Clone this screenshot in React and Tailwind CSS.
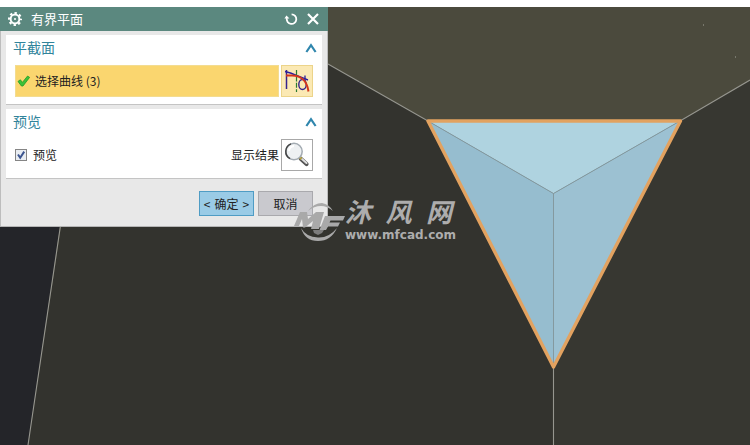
import { useState } from 'react'

function GearIcon() {
  return (
    <svg viewBox="0 0 16 16" className="size-4" fill="none" stroke="#fff">
      <circle cx="8" cy="8" r="4.4" strokeWidth="2" />
      <circle cx="8" cy="8" r="6" strokeWidth="2" strokeDasharray="2.4 2.31" strokeDashoffset="1.2" />
      <circle cx="8" cy="8" r="1" fill="#fff" stroke="none" />
    </svg>
  )
}

function ResetIcon() {
  return (
    <svg viewBox="0 0 14 14" className="size-3.5" fill="none" stroke="#fff" strokeWidth="1.8">
      <path d="M7.6 2.3 A4.8 4.8 0 1 1 2.8 6.2" />
      <path d="M.4 6.6 L2.5 3.4 L5.4 6.4 Z" fill="#fff" stroke="none" />
    </svg>
  )
}

function CloseIcon() {
  return (
    <svg viewBox="0 0 14 14" className="size-3.5" fill="none" stroke="#fff" strokeWidth="2.2">
      <path d="M2 2 L12 12 M12 2 L2 12" />
    </svg>
  )
}

function CaretIcon({ className }) {
  return (
    <svg viewBox="0 0 12 10" className={className} fill="none" stroke="#2f86ad" strokeWidth="2.2">
      <path d="M1.4 9 L6 2.2 L10.6 9" />
    </svg>
  )
}

function TickIcon() {
  return (
    <svg viewBox="0 0 14 14" className="size-3.5" fill="#3cc238" stroke="#1f9a24" strokeWidth=".8">
      <path d="M1 7.4 L3.4 5.8 L5.4 8.4 L10.6 2 L12.6 3.4 L6 12 L4.4 12 Z" />
    </svg>
  )
}

function CurveIcon() {
  return (
    <svg viewBox="0 0 30 30" className="size-full" fill="none">
      <path d="M4.5 4 V23" stroke="#35238c" strokeWidth="1.5" />
      <path d="M3 5.5 C10 7 18 11 26 14" stroke="#2a1f9c" strokeWidth="1.4" />
      <path d="M14.5 4 V26" stroke="#2c7a32" strokeWidth="1.2" strokeDasharray="5 1.4" />
      <ellipse cx="20.5" cy="18.5" rx="3.7" ry="5" stroke="#35238c" strokeWidth="1.4" />
      <path d="M23 9.5 V15" stroke="#2a1f9c" strokeWidth="1.3" />
      <path d="M4 9.5 H10 C18 9.5 25 14 26.5 25.5" stroke="#d4361b" strokeWidth="2" />
    </svg>
  )
}

function MagnifierIcon() {
  return (
    <svg viewBox="0 0 30 30" className="size-full" fill="none">
      <path d="M18.5 18.5 L24.5 24" stroke="#555" strokeWidth="4.2" strokeLinecap="round" />
      <path d="M20 19 L24.5 23" stroke="#dedede" strokeWidth="2" strokeLinecap="round" />
      <path d="M16.6 16.2 L19.4 19" stroke="#b5a03c" strokeWidth="2.6" />
      <circle cx="12" cy="11.5" r="8.2" fill="#eef1f3" stroke="#a3abb2" strokeWidth="1.5" />
      <path d="M8 18.7 A8.2 8.2 0 0 1 9 3.9" stroke="#444" strokeWidth="1.5" />
      <path d="M7 11 A5.5 5.5 0 0 1 12 6" stroke="#fff" strokeWidth="2" />
    </svg>
  )
}

function Viewport() {
  return (
    <svg viewBox="0 7 750 438" preserveAspectRatio="xMinYMin slice" className="absolute inset-0 size-full" fill="none">
      <path d="M0 7 H750 V445 H0 Z" fill="#4b4a3d" />
      <path d="M328 64 L427 120 L553.5 367 V445 H28 L62 220 V7 H328 Z" fill="#33332e" />
      <path d="M750 80 L681 120 L553.5 367 V445 H750 Z" fill="#373731" />
      <path d="M0 220 H61 L28 445 H0 Z" fill="#242529" />
      <path d="M61 222 L28 445 M328 64 L428 121 M750 80 L680 121 M553.5 367 V445" stroke="#96968f" strokeWidth="1.1" />
      <path d="M428 121 H680 L553.5 193.5 Z" fill="#afd3e0" />
      <path d="M428 121 L553.5 193.5 V367 Z" fill="#96bdcf" />
      <path d="M680 121 L553.5 193.5 V367 Z" fill="#9cc1d2" />
      <path d="M428 121 L553.5 193.5 L680 121 M553.5 193.5 V367" stroke="#84999f" />
      <path d="M428 121 H680.5 L553.5 367 Z" stroke="#e2a260" strokeWidth="3.4" strokeLinejoin="round" />
      <path d="M703 25 h1 M735 57 h1" stroke="#a5a59c" />
    </svg>
  )
}

function Watermark() {
  return (
    <div className="pointer-events-none absolute top-[191px] left-[293px] flex items-center text-[#adadad]">
      <svg viewBox="0 0 52 44" className="h-11 w-[52px]" fill="#a9a9a9">
        <path d="M15 13 Q21 5 29 5 Q36 6 40 13 Q34 8 28 8 Q21 8 15 13 Z" />
        <path d="M8 30 Q12 43 25 43 Q38 43 44 30 Q36 40 25 39.5 Q13 39 8 30 Z" />
        <path d="M1 28 L7 14 H14 L15 21 L23 14 H31 L26 31 H18 L20 23 L12 29.5 H10 L9 21 L6 28 Z" />
        <path d="M32 18 H52 L50 22.5 H37.5 L36.5 24.5 H47 L45 28.5 H35 L33 32 H26.5 Z" />
        <path d="M20 32 H31 L29 35 L25 37 L21 35 Z" fill="#7d7d7d" />
      </svg>
      <div>
        <div className="flex justify-between pr-1 font-['Liberation_Sans','Noto_Sans_CJK_SC',sans-serif] text-[26px] leading-[30px] font-bold italic">
          <span>沐</span>
          <span>风</span>
          <span>网</span>
        </div>
        <div className="font-['DejaVu_Sans',sans-serif] text-[12px] leading-[14px] font-bold">www.mfcad.com</div>
      </div>
    </div>
  )
}

function Section({ title, children }) {
  const [open, setOpen] = useState(true)
  return (
    <section className="border-b border-[#c4c4c4] bg-white px-[9px] pb-[7px]">
      <div className="-ml-0.5 flex h-[30px] items-start justify-between">
        <h2 className="text-[14px] leading-[25px] text-[#31849b]">{title}</h2>
        <button type="button" aria-label={title} aria-expanded={open} onClick={() => setOpen(!open)} className="-mr-1 flex h-[25px] items-center">
          <CaretIcon className={open ? 'h-2.5 w-3' : 'h-2.5 w-3 rotate-180'} />
        </button>
      </div>
      {open && children}
    </section>
  )
}

export default function App() {
  const [preview, setPreview] = useState(true)
  return (
    <div className="flex min-h-screen flex-col bg-white pt-[7px] font-['Noto_Sans_CJK_SC',sans-serif] text-[12px] text-[#222]">
      <main className="relative flex-1 overflow-hidden">
        <Viewport />
        <div role="dialog" aria-label="有界平面" className="relative w-[328px] border-b border-[#b5b5b5] bg-[#e8e8e8]">
          <header className="flex h-6 items-center gap-2 bg-[#5b887f] pr-2 pl-[7px] text-white">
            <GearIcon />
            <h1 className="flex-1 text-[13px] leading-6">有界平面</h1>
            <button type="button" aria-label="重置"><ResetIcon /></button>
            <button type="button" aria-label="关闭"><CloseIcon /></button>
          </header>

          <div className="border-x border-[#bdbdbd] px-[5px] pt-1 pb-2.5">
            <div className="flex flex-col gap-1">
              <Section title="平截面">
                <div className="flex gap-0.5">
                  <button type="button" className="flex h-8 flex-1 items-center gap-1 border border-[#f3dc90] bg-[#fad66f] pl-px">
                    <TickIcon />
                    选择曲线 (3)
                  </button>
                  <button type="button" aria-label="曲线" className="size-8 border border-[#ecd48a] bg-[#fbe9b4]"><CurveIcon /></button>
                </div>
              </Section>

              <Section title="预览">
                <div className="flex items-center justify-between">
                  <label className="flex items-center gap-1.5">
                    <span className="relative size-3">
                      <input
                        type="checkbox"
                        checked={preview}
                        onChange={e => setPreview(e.target.checked)}
                        className="block size-3 appearance-none border border-[#858585] bg-[#e9edf2]"
                      />
                      {preview && (
                        <svg viewBox="0 0 12 12" className="pointer-events-none absolute inset-0 size-3" fill="none" stroke="#3c5590" strokeWidth="2">
                          <path d="M3 5.5 L5.2 8.8 L9.2 2.6" />
                        </svg>
                      )}
                    </span>
                    预览
                  </label>
                  <div className="flex items-center gap-0.5">
                    <span id="show-result">显示结果</span>
                    <button type="button" aria-labelledby="show-result" className="size-8 border border-[#a8a8a8] bg-white"><MagnifierIcon /></button>
                  </div>
                </div>
              </Section>
            </div>

            <div className="flex justify-end gap-1 pt-3 pr-[9px]">
              <button type="button" className="flex h-[25px] w-[55px] items-center justify-center gap-1 border border-[#4f9cc4] bg-[#9acbe6]">
                <span>&lt;</span>
                <span>确定</span>
                <span>&gt;</span>
              </button>
              <button type="button" className="h-[25px] w-[55px] border border-[#a9a9ad] bg-[#c9c9ce]">取消</button>
            </div>
          </div>
        </div>
        <Watermark />
      </main>
    </div>
  )
}
